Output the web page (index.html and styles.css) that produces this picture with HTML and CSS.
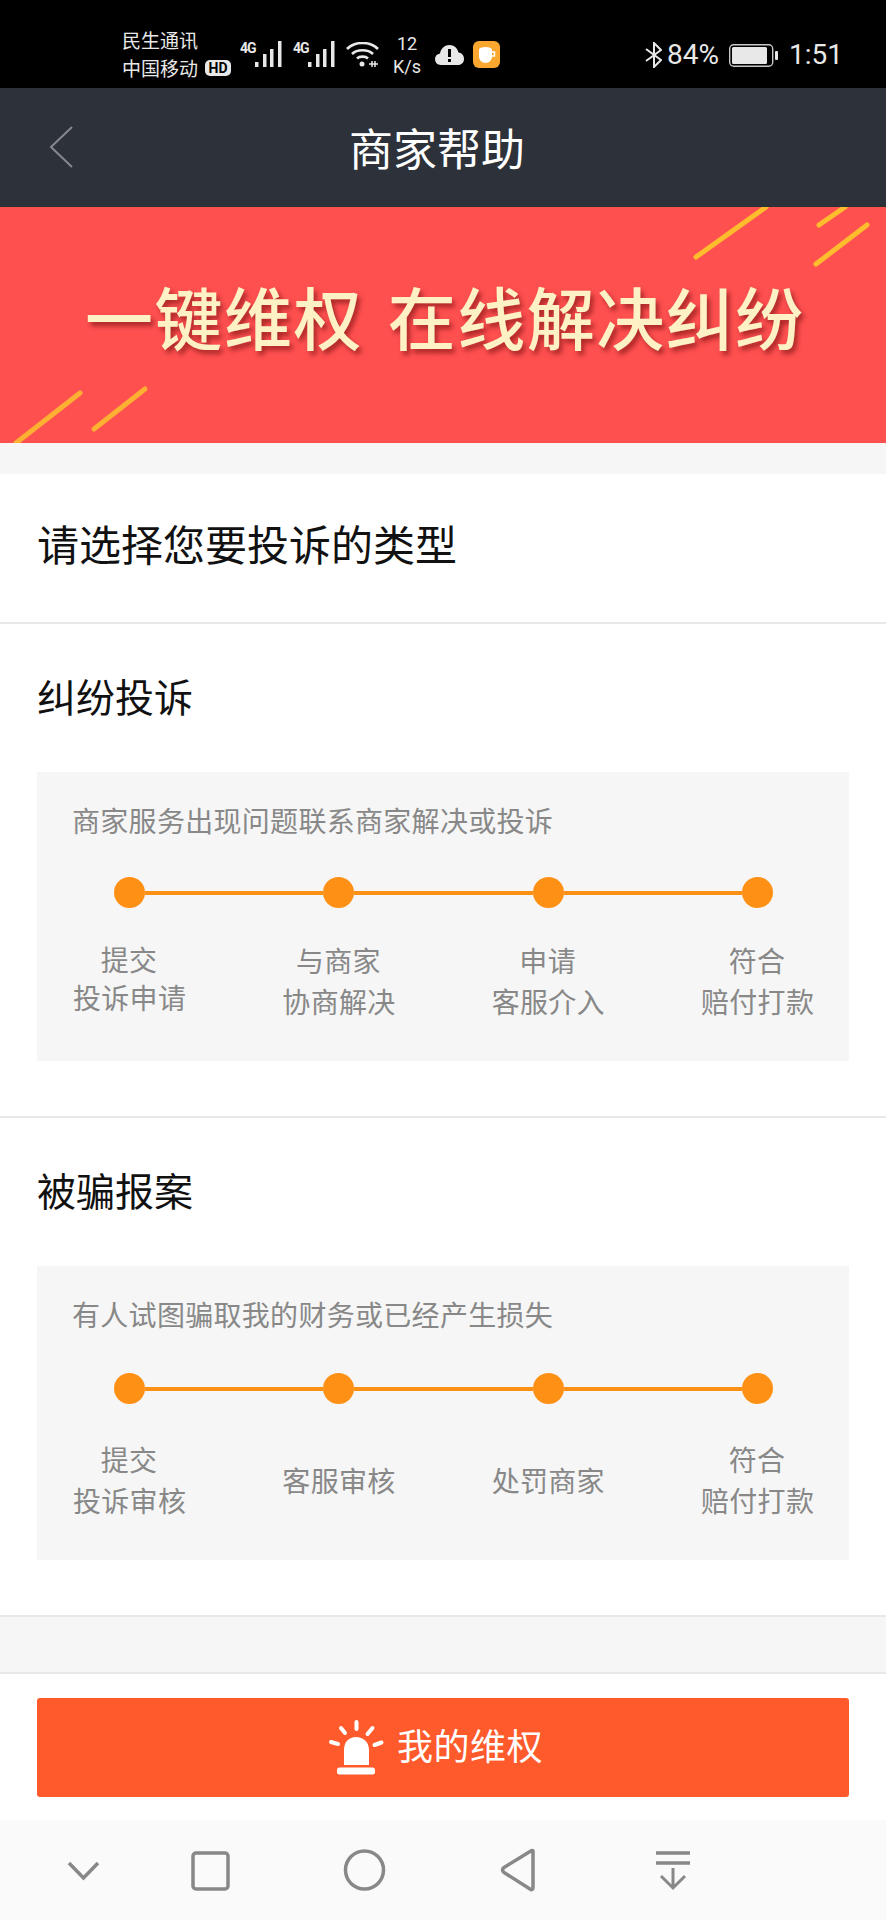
FILE: index.html
```html
<!DOCTYPE html>
<html lang="zh-CN">
<head>
  <meta charset="UTF-8" />
  <meta name="viewport" content="width=device-width, initial-scale=1.0"/>
  <title>商家帮助</title>
  <link rel="stylesheet" href="styles.css">
</head>
<body>

  <div class="status-bar">
    <div class="carrier">
      <div>民生通讯</div>
      <div>中国移动</div>
    </div>
    <span class="hd-badge">HD</span>
    <span class="net-label">4G</span>
    <svg class="signal" width="30" height="28" viewBox="0 0 30 28" fill="#e8e8e8">
      <rect x="0" y="22" width="3.5" height="5"/>
      <rect x="8" y="14" width="3.5" height="13"/>
      <rect x="15" y="9" width="3.5" height="18"/>
      <rect x="23" y="1" width="3.5" height="26"/>
    </svg>
    <span class="net-label net-label-second">4G</span>
    <svg class="signal" width="30" height="28" viewBox="0 0 30 28" fill="#e8e8e8">
      <rect x="0" y="22" width="3.5" height="5"/>
      <rect x="8" y="14" width="3.5" height="13"/>
      <rect x="15" y="9" width="3.5" height="18"/>
      <rect x="23" y="1" width="3.5" height="26"/>
    </svg>
    <svg class="wifi" width="33" height="26" viewBox="0 0 33 26" fill="none" stroke="#e8e8e8" stroke-width="2.6">
      <path d="M1 7C9 -1 24 -1 32 7"/>
      <path d="M6 12C11 7 22 7 27 12"/>
      <path d="M11 16.500C13.500 14 19.500 14 22 16.500"/>
      <circle cx="16" cy="22" r="2.500" fill="#e8e8e8" stroke="none"/>
      <path d="M23 22H32M26 19V25M29 19V25" stroke-width="1.500"/>
    </svg>
    <div class="speed">
      <div>12</div>
      <div>K/s</div>
    </div>
    <svg class="cloud" width="29" height="20" viewBox="0 0 29 20">
      <path d="M6 20C2 20 0 17 0 14C0 11 2 9 5 8.500C6 3 10 0 14.500 0C19 0 22.500 3 23.500 7.500C27 8 29 10.500 29 14C29 17.500 26.500 20 23 20Z" fill="#e8e8e8"/>
      <rect x="13" y="4" width="3" height="8" fill="#000"/>
      <rect x="13" y="14" width="3" height="3" fill="#000"/>
    </svg>
    <svg class="cup-app" width="27" height="27" viewBox="0 0 27 27">
      <rect width="27" height="27" rx="6" fill="#f9a72e"/>
      <path d="M6 9H19V15C19 19 16.500 22 12.500 22C8.500 22 6 19 6 15Z" fill="#fff"/>
      <ellipse cx="12.500" cy="8.500" rx="6.500" ry="2.500" fill="#fff"/>
      <path d="M19 11H21.500V15H19" fill="none" stroke="#fff" stroke-width="1.500"/>
    </svg>

    <div class="status-right">
      <svg width="17" height="26" viewBox="0 0 17 26" fill="none" stroke="#e8e8e8" stroke-width="2">
        <path d="M1 7L16 18L9 25V1L16 8L1 19"/>
      </svg>
      <span class="battery-text">84%</span>
      <svg class="battery" width="49" height="23" viewBox="0 0 49 23">
        <rect x="0.700" y="0.700" width="43" height="21.600" rx="4" fill="none" stroke="#c8c8c8" stroke-width="1.400"/>
        <rect x="3" y="3" width="35" height="17" rx="1.500" fill="#e8e8e8"/>
        <rect x="46" y="7" width="3" height="9" rx="1" fill="#e8e8e8"/>
      </svg>
      <span class="clock">1:51</span>
    </div>
  </div>

  <div class="nav-bar">
    <svg width="24" height="42" viewBox="0 0 24 42" fill="none" stroke="#85898e" stroke-width="2">
      <path d="M23 1L2 21L23 41"/>
    </svg>
    <h1 class="nav-title">商家帮助</h1>
  </div>

  <div class="banner">
    <svg class="banner-lines" width="886" height="236" viewBox="0 0 886 236" fill="none" stroke-width="5" stroke-linecap="round">
      <path d="M766 0L696 50" stroke="#ffbd2e"/>
      <path d="M845 0L819 18" stroke="#ffbd2e"/>
      <path d="M867 18L816 57" stroke="#ffbd2e"/>
      <path d="M80 186L16 236" stroke="#fdb032"/>
      <path d="M145 182L94 222" stroke="#fdb032"/>
    </svg>
    <div class="banner-text">一键维权 在线解决纠纷</div>
  </div>

  <div class="gap"></div>

  <div class="page-title">请选择您要投诉的类型</div>

  <div class="section">
    <h2 class="section-title">纠纷投诉</h2>
    <div class="card">
      <div class="card-title">商家服务出现问题联系商家解决或投诉</div>
      <div class="track">
        <span class="dot"></span><span class="bar"></span>
        <span class="dot"></span><span class="bar"></span>
        <span class="dot"></span><span class="bar"></span>
        <span class="dot"></span>
      </div>
      <div class="steps">
        <div class="step step-raised">提交<br>投诉申请</div>
        <div class="step">与商家<br>协商解决</div>
        <div class="step">申请<br>客服介入</div>
        <div class="step">符合<br>赔付打款</div>
      </div>
    </div>
  </div>

  <div class="section section-report">
    <h2 class="section-title">被骗报案</h2>
    <div class="card">
      <div class="card-title">有人试图骗取我的财务或已经产生损失</div>
      <div class="track">
        <span class="dot"></span><span class="bar"></span>
        <span class="dot"></span><span class="bar"></span>
        <span class="dot"></span><span class="bar"></span>
        <span class="dot"></span>
      </div>
      <div class="steps">
        <div class="step">提交<br>投诉审核</div>
        <div class="step">客服审核</div>
        <div class="step">处罚商家</div>
        <div class="step">符合<br>赔付打款</div>
      </div>
    </div>
  </div>

  <div class="spacer"></div>

  <div class="action-area">
    <button class="action-button">
      <svg width="60" height="60" viewBox="18 16 60 60" fill="#fff">
        <path d="M35 63V48C35 40 40 35 47 35C54 35 60 40 60 48V63Z"/>
        <rect x="28" y="65.500" width="38" height="7" rx="2.500"/>
        <g stroke="#fff" stroke-width="4" stroke-linecap="round" fill="none">
          <path d="M47.500 20V27"/>
          <path d="M32 26L36 31"/>
          <path d="M63.500 26L58.500 32"/>
          <path d="M22 40L29 42"/>
          <path d="M72.500 40.500L65.500 43"/>
        </g>
      </svg>
      <span class="action-label">我的维权</span>
    </button>
  </div>

  <svg class="system-nav" width="886" height="100" viewBox="0 0 886 100" fill="none" stroke="#888" stroke-width="3.500">
    <path d="M69 43L83.500 58L98 43"/>
    <rect x="193" y="33" width="35" height="36" rx="3"/>
    <circle cx="364.500" cy="50" r="19"/>
    <path d="M533 31V68C533 70 531.500 70 530 69L504 52.500C502 51 502 49 504 47.500L530 31.500C531.500 30.500 533 30 533 31Z" stroke-linejoin="round"/>
    <path d="M656 33H690M656 43H690"/>
    <path d="M673 48V68M661 56L673 68L685 56" stroke-width="3"/>
  </svg>

</body>
</html>
```

FILE: styles.css
```css
* {
  box-sizing: border-box;
}
body {
  font-family: "Noto Sans CJK SC", Roboto, sans-serif;
  background-color: #fff;
  color: #111;
  margin: 0;
  width: 886px;
  height: 1920px;
  overflow: hidden;
}
h1, h2 {
  margin: 0;
  font-weight: 400;
}

/* status bar */
.status-bar {
  height: 88px;
  background-color: #000;
  color: #e8e8e8;
  display: flex;
  align-items: center;
  padding: 22px 43px 0 122px;
}
.carrier {
  font-size: 19px;
  line-height: 28px;
  width: 83px;
  margin-bottom: 2px;
}
.hd-badge {
  width: 26px;
  height: 16px;
  margin-top: 26px;
  background-color: #e8e8e8;
  color: #000;
  border-radius: 5px;
  font-family: Roboto, sans-serif;
  font-size: 14px;
  font-weight: 700;
  line-height: 16px;
  text-align: center;
}
.net-label {
  font-family: Roboto, sans-serif;
  font-size: 14px;
  font-weight: 700;
  letter-spacing: -1px;
  margin: -15px 0 0 9px;
  width: 15px;
}
.net-label-second {
  margin-left: 8px;
}
.signal {
  margin-top: -3px;
}
.wifi {
  margin: -1px 0 0 8px;
}
.speed {
  font-family: Roboto, sans-serif;
  font-size: 18px;
  line-height: 23px;
  width: 30px;
  margin-left: 13px;
  text-align: center;
}
.cloud {
  margin-left: 13px;
}
.cup-app {
  margin: -1px 0 0 9px;
}
.status-right {
  margin-left: auto;
  display: flex;
  align-items: center;
  font-family: Roboto, sans-serif;
  font-size: 28px;
  line-height: 32px;
}
.battery-text {
  margin-left: 5px;
  width: 54px;
}
.battery {
  margin-left: 8px;
}
.clock {
  margin-left: 11px;
}

/* title bar */
.nav-bar {
  height: 119px;
  background-color: #2d3139;
  border-bottom: 1px solid #27332f;
  display: flex;
  align-items: center;
  padding-left: 49px;
}
.nav-title {
  color: #fff;
  font-size: 44px;
  line-height: 60px;
  margin: 0 0 0 276px;
}

/* red banner */
.banner {
  position: relative;
  height: 236px;
  background-color: #ff5050;
  display: flex;
  align-items: center;
  padding: 0 0 18px 85px;
}
.banner-lines {
  position: absolute;
  left: 0;
  top: 0;
}
.banner-text {
  position: relative;
  color: #fdf1c5;
  font-size: 68px;
  font-weight: 500;
  line-height: 80px;
  letter-spacing: 1.5px;
  word-spacing: 8px;
  white-space: nowrap;
  text-shadow: 3px 4px 5px rgba(140, 25, 25, 0.75);
}
.gap {
  height: 31px;
  background-color: #f6f6f6;
}

/* list */
.page-title {
  height: 150px;
  border-bottom: 2px solid #e8e8e8;
  padding: 39px 0 0 37px;
  font-size: 42px;
  line-height: 60px;
}
.section {
  height: 494px;
  padding: 0 37px;
  border-bottom: 2px solid #e8e8e8;
}
.section-title {
  height: 148px;
  font-size: 39px;
  line-height: 142px;
}
.card {
  background-color: #f6f6f6;
  padding: 28px 0 39px;
  color: #888;
  font-size: 28px;
  letter-spacing: 0.3px;
}
.card-title {
  line-height: 40px;
  padding-left: 35px;
}
.track {
  display: flex;
  align-items: center;
  margin: 37px 76px 0 77px;
  height: 31px;
}
.dot {
  width: 31px;
  height: 31px;
  border-radius: 50%;
  background-color: #ff9016;
}
.bar {
  flex: 1;
  height: 4px;
  background-color: #ff9016;
}
.steps {
  display: flex;
  justify-content: space-between;
  align-items: center;
  height: 82px;
  margin-top: 32px;
  padding: 0 36px;
}
.step {
  width: 112px;
  text-align: center;
  line-height: 41px;
  white-space: nowrap;
}
.step-raised {
  line-height: 38px;
  margin-bottom: 6px;
}
.section-report {
  height: 499px;
}
.section-report .track {
  margin-top: 39px;
}
.section-report .steps {
  margin-top: 35px;
}

/* bottom */
.spacer {
  height: 57px;
  background-color: #f6f6f6;
  border-bottom: 2px solid #e8e8e8;
}
.action-area {
  height: 146px;
  padding: 24px 37px 0;
}
.action-button {
  width: 100%;
  height: 99px;
  border: none;
  border-radius: 3px;
  background-color: #ff5a2b;
  color: #fff;
  font-family: inherit;
  font-size: 36px;
  letter-spacing: 0.5px;
  display: flex;
  align-items: center;
  justify-content: center;
  gap: 10px;
  padding: 0 16px 0 0;
}
.action-label {
  margin-bottom: 8px;
}
.system-nav {
  display: block;
  background-color: #fafafa;
}
```
